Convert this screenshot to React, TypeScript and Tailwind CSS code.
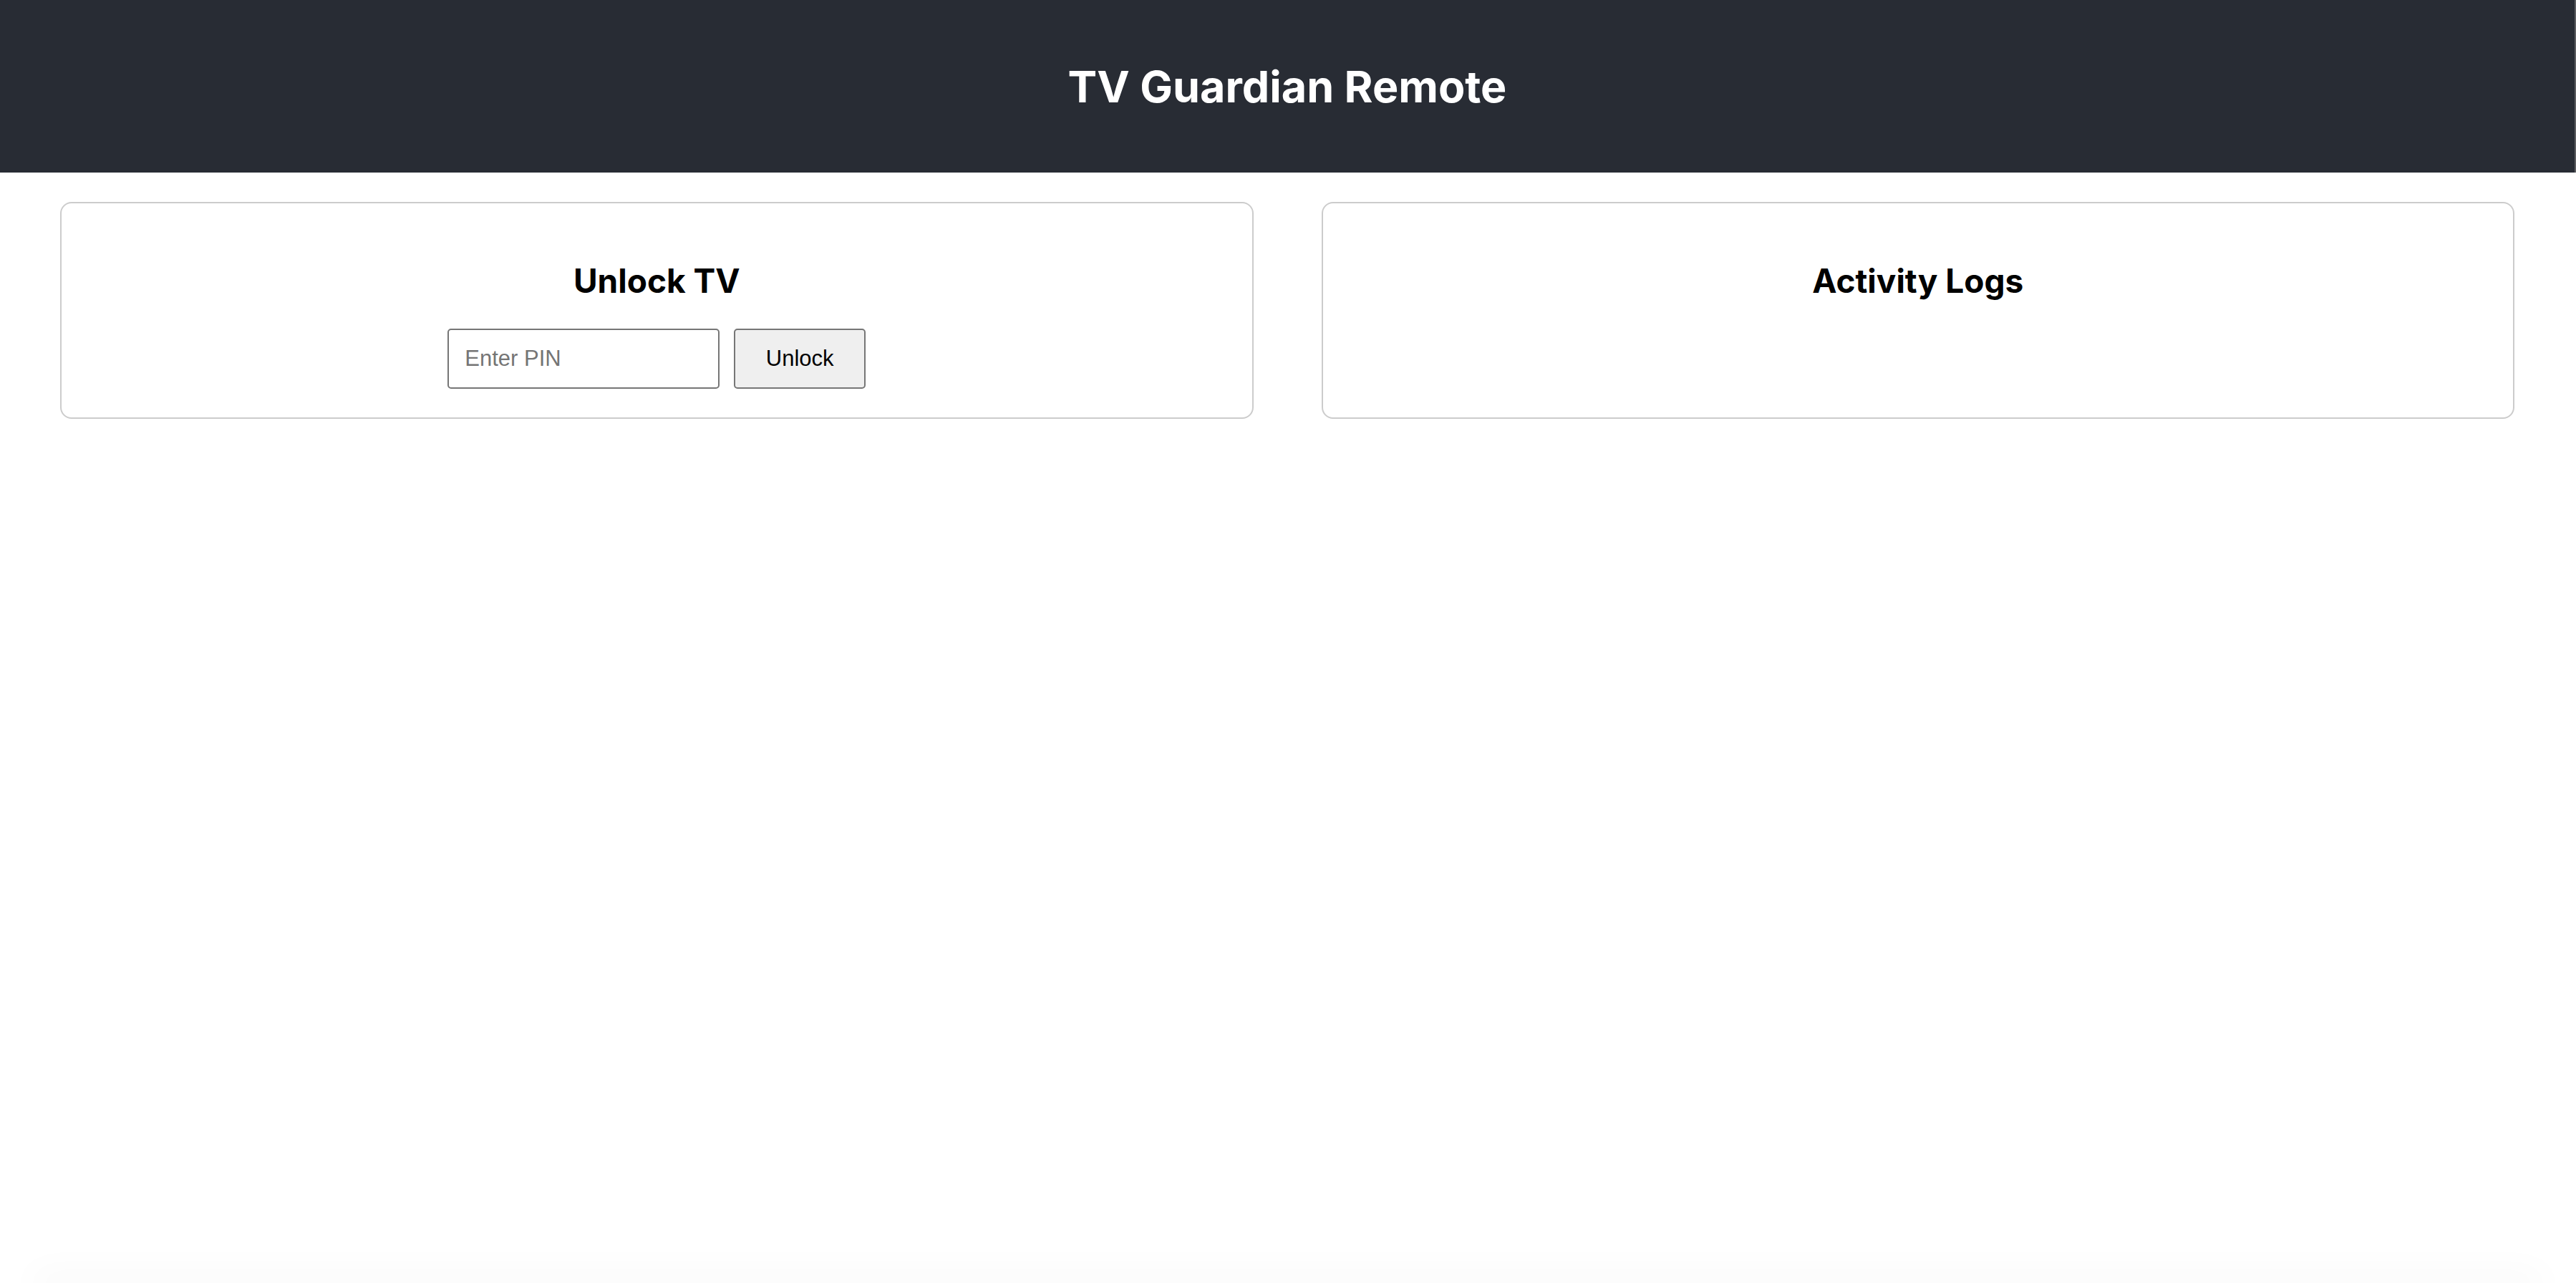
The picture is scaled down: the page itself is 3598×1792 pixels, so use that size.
import { useState } from 'react';

const headingFont = { fontFamily: 'Inter, "Noto Sans", sans-serif' };

const Card = ({ title, children }: { title: string; children?: React.ReactNode }) => (
  <section className="flex flex-col items-center rounded-[16px] border-2 border-[#cccccc] bg-white pt-[78px] pb-[40px]">
    <h2 style={headingFont} className="text-[46px] font-bold leading-[60px] text-black">
      {title}
    </h2>
    {children}
  </section>
);

export default function App() {
  const [pin, setPin] = useState('');

  return (
    <div className="flex min-h-screen flex-col bg-white">
      <header className="flex h-[241px] items-center justify-center border-r-2 border-[#5b5c60] bg-[#282c34]">
        <h1 style={headingFont} className="text-[61px] font-bold leading-[72px] text-white">
          TV Guardian Remote
        </h1>
      </header>

      <main className="grid grid-cols-2 gap-[95px] pl-[84px] pr-[86px] pt-[41px]">
        <Card title="Unlock TV">
          <div className="mt-[37px] flex gap-[20px]" style={{ fontFamily: '"Liberation Sans", Arial, sans-serif' }}>
            <input
              type="password"
              value={pin}
              onChange={(e) => setPin(e.target.value)}
              placeholder="Enter PIN"
              className="h-[84px] w-[380px] rounded-[5px] border-2 border-[#767676] bg-white px-[22px] text-[31px] text-black placeholder:text-[#757575] outline-none"
            />
            <button className="h-[84px] w-[184px] rounded-[5px] border-2 border-[#767676] bg-[#efefef] text-[31px] text-black">
              Unlock
            </button>
          </div>
        </Card>

        <Card title="Activity Logs" />
      </main>

      <div className="flex-1" />
      <div className="mx-[60px] h-0 shadow-[0_0_50px_14px_rgba(0,0,0,0.035)]" />
    </div>
  );
}
